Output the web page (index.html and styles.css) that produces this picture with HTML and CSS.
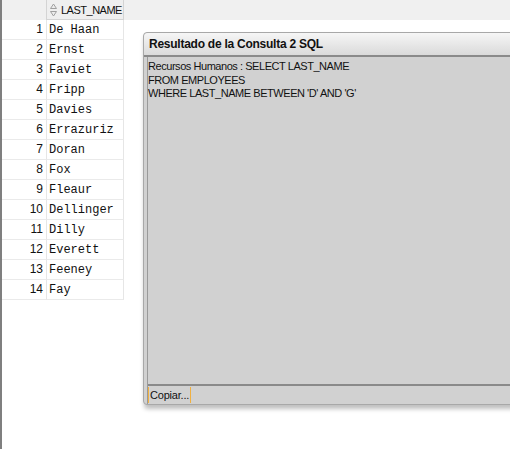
FILE: index.html
```html
<!DOCTYPE html>
<html>
<head>
<meta charset="utf-8">
<link rel="stylesheet" href="styles.css">
</head>
<body>
<div class="app">
  <div class="gutter"></div>
  <div class="grid">
    <div class="head">
      <div class="corner"></div>
      <div class="hcell">
        <svg class="sort" width="9" height="14" viewBox="0 0 9 14">
          <path d="M4.5 1 L7.5 5.5 L1.5 5.5 Z" fill="#ececec" stroke="#a0a0a0" stroke-width="1"/>
          <path d="M4.5 13 L7.5 8.5 L1.5 8.5 Z" fill="#ececec" stroke="#a0a0a0" stroke-width="1"/>
        </svg>
        <span>LAST_NAME</span>
      </div>
    </div>
    <div class="row"><div class="num">1</div><div class="val">De Haan</div></div>
    <div class="row"><div class="num">2</div><div class="val">Ernst</div></div>
    <div class="row"><div class="num">3</div><div class="val">Faviet</div></div>
    <div class="row"><div class="num">4</div><div class="val">Fripp</div></div>
    <div class="row"><div class="num">5</div><div class="val">Davies</div></div>
    <div class="row"><div class="num">6</div><div class="val">Errazuriz</div></div>
    <div class="row"><div class="num">7</div><div class="val">Doran</div></div>
    <div class="row"><div class="num">8</div><div class="val">Fox</div></div>
    <div class="row"><div class="num">9</div><div class="val">Fleaur</div></div>
    <div class="row"><div class="num">10</div><div class="val">Dellinger</div></div>
    <div class="row"><div class="num">11</div><div class="val">Dilly</div></div>
    <div class="row"><div class="num">12</div><div class="val">Everett</div></div>
    <div class="row"><div class="num">13</div><div class="val">Feeney</div></div>
    <div class="row"><div class="num">14</div><div class="val">Fay</div></div>
  </div>
  <div class="dialog">
    <div class="title">Resultado de la Consulta 2 SQL</div>
    <div class="body">
      <div class="text">Recursos Humanos : SELECT LAST_NAME<br>FROM EMPLOYEES<br>WHERE LAST_NAME BETWEEN 'D' AND 'G'</div>
      <div class="footer"><span class="copy">Copiar...</span></div>
    </div>
  </div>
</div>
</body>
</html>
```

FILE: styles.css
```css
html, body {
  margin: 0;
  padding: 0;
  background: #ffffff;
  overflow: hidden;
}
.app {
  position: relative;
  display: flex;
  width: 510px;
  height: 449px;
  font-family: "Liberation Sans", Arial, sans-serif;
}
.gutter {
  width: 2px;
  background: #7f7f7f;
  flex: none;
}
.grid {
  flex: 1;
  display: flex;
  flex-direction: column;
}
.head {
  display: flex;
  height: 20px;
  background: #f0f0f0;
}
.corner {
  width: 44px;
}
.hcell {
  width: 78px;
  box-sizing: border-box;
  border: 1px solid #d4d4d4;
  border-top: none;
  background: #efefef;
  display: flex;
  align-items: center;
  gap: 3px;
  padding-left: 2px;
  font-size: 11px;
  letter-spacing: -0.5px;
  color: #111;
  white-space: nowrap;
  overflow: hidden;
}
.sort {
  flex: none;
}
.row {
  display: flex;
  height: 20px;
}
.num {
  width: 44px;
  box-sizing: border-box;
  text-align: right;
  padding-right: 3px;
  font-size: 12px;
  line-height: 18px;
  color: #111;
  border-bottom: 1px solid #eaeaea;
}
.val {
  width: 78px;
  box-sizing: border-box;
  padding-left: 2px;
  font-family: "Liberation Mono", "Courier New", monospace;
  font-size: 12px;
  line-height: 20px;
  color: #111;
  border-left: 1px solid #e6e6e6;
  border-right: 1px solid #e6e6e6;
  border-bottom: 1px solid #eaeaea;
}
.dialog {
  position: absolute;
  left: 143px;
  top: 32px;
  width: 380px;
  height: 373px;
  box-sizing: border-box;
  border: 1px solid #a8a8a8;
  border-radius: 4px 0 0 4px;
  background: #d1d1d1;
  box-shadow: 1px 4px 4px rgba(0, 0, 0, 0.25);
  display: flex;
  flex-direction: column;
}
.title {
  height: 24px;
  box-sizing: border-box;
  background: linear-gradient(#f6f6f6, #dadada);
  border-radius: 4px 0 0 0;
  border-bottom: 2px solid #8a8a8a;
  padding-left: 5px;
  font-weight: bold;
  font-size: 12px;
  letter-spacing: -0.25px;
  line-height: 22px;
  color: #111;
}
.body {
  flex: 1;
  margin-left: 3px;
  border-left: 1px solid #9a9a9a;
  display: flex;
  flex-direction: column;
}
.text {
  flex: 1;
  padding: 3px 0 0 0;
  font-size: 11px;
  letter-spacing: -0.45px;
  line-height: 13.5px;
  color: #111;
  border-bottom: 2px solid #8a8a8a;
}
.footer {
  height: 18px;
  display: flex;
  align-items: center;
}
.copy {
  font-size: 11px;
  letter-spacing: -0.2px;
  color: #111;
  padding: 0 1px;
  border-left: 1px solid #f0b040;
  border-right: 1px solid #f0b040;
  line-height: 16px;
}
```
